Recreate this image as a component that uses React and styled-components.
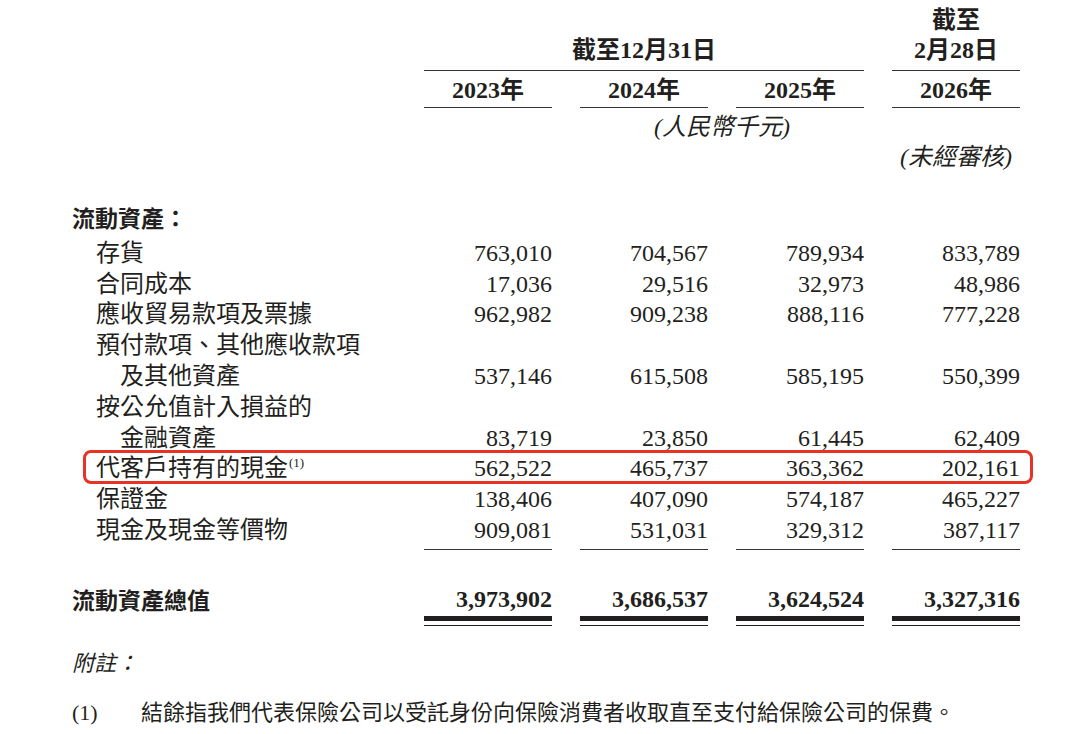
import styled, { createGlobalStyle } from "styled-components";

const GlobalStyle = createGlobalStyle`
  html, body {
    margin: 0;
    padding: 0;
    background: #ffffff;
  }
  body {
    font-family: "Liberation Serif", "Noto Sans CJK TC", serif;
    color: #231f20;
  }
`;

const COLUMNS = "324px repeat(4, 128px)";

const rows = [
  { label: "存貨", indent: 1, values: ["763,010", "704,567", "789,934", "833,789"] },
  { label: "合同成本", indent: 1, values: ["17,036", "29,516", "32,973", "48,986"] },
  { label: "應收貿易款項及票據", indent: 1, values: ["962,982", "909,238", "888,116", "777,228"] },
  { label: "預付款項、其他應收款項", indent: 1, values: [] },
  { label: "及其他資產", indent: 2, values: ["537,146", "615,508", "585,195", "550,399"] },
  { label: "按公允值計入損益的", indent: 1, values: [] },
  { label: "金融資產", indent: 2, values: ["83,719", "23,850", "61,445", "62,409"] },
  { label: "代客戶持有的現金", note: "(1)", highlight: true, indent: 1, values: ["562,522", "465,737", "363,362", "202,161"] },
  { label: "保證金", indent: 1, values: ["138,406", "407,090", "574,187", "465,227"] },
  { label: "現金及現金等價物", indent: 1, underline: true, values: ["909,081", "531,031", "329,312", "387,117"] },
];

const totals = ["3,973,902", "3,686,537", "3,624,524", "3,327,316"];
const years = ["2023年", "2024年", "2025年", "2026年"];

export default function App() {
  return (
    <Page>
      <GlobalStyle />
      <Header>
        <PeriodHeading>截至12月31日</PeriodHeading>
        <StubHeading>
          截至
          <br />
          2月28日
        </StubHeading>
        {years.map((y) => (
          <YearCell key={y}>{y}</YearCell>
        ))}
        <Currency>(人民幣千元)</Currency>
        <Unaudited>(未經審核)</Unaudited>
      </Header>

      <SectionTitle>流動資產：</SectionTitle>

      {rows.map((row) => (
        <Row key={row.label}>
          {row.highlight && <Highlight />}
          <Label $indent={row.indent}>
            {row.label}
            {row.note && <Note>{row.note}</Note>}
          </Label>
          {row.values.map((v, i) => (
            <Value key={i} $underline={row.underline}>
              {v}
            </Value>
          ))}
        </Row>
      ))}

      <TotalRow>
        <TotalLabel>流動資產總值</TotalLabel>
        {totals.map((v) => (
          <TotalCell key={v}>
            <TotalValue>{v}</TotalValue>
          </TotalCell>
        ))}
      </TotalRow>

      <NoteTitle>附註：</NoteTitle>
      <Footnote>
        <span>(1)</span>
        <span>結餘指我們代表保險公司以受託身份向保險消費者收取直至支付給保險公司的保費。</span>
      </Footnote>
    </Page>
  );
}

const Page = styled.div`
  width: 1080px;
  height: 734px;
  box-sizing: border-box;
  padding: 5px 60px 0 72px;
  overflow: hidden;
`;

const Header = styled.div`
  display: grid;
  grid-template-columns: ${COLUMNS};
  column-gap: 28px;
  font-size: 24px;
  line-height: 30px;
`;

const PeriodHeading = styled.div`
  grid-column: 2 / 5;
  grid-row: 1;
  align-self: end;
  text-align: center;
  font-weight: 700;
  padding-bottom: 5px;
  border-bottom: 1.5px solid #333;
`;

const StubHeading = styled.div`
  grid-column: 5;
  grid-row: 1;
  text-align: center;
  font-weight: 700;
  padding-bottom: 5px;
  border-bottom: 1.5px solid #333;
`;

const YearCell = styled.div`
  grid-row: 2;
  &:nth-of-type(3) { grid-column: 2; }
  &:nth-of-type(4) { grid-column: 3; }
  &:nth-of-type(5) { grid-column: 4; }
  &:nth-of-type(6) { grid-column: 5; }
  text-align: center;
  font-weight: 700;
  padding: 4px 0 2px;
  border-bottom: 1.5px solid #333;
`;

const Currency = styled.div`
  grid-column: 2 / 6;
  grid-row: 3;
  text-align: center;
  font-style: italic;
  padding-top: 4px;
`;

const Unaudited = styled.div`
  grid-column: 5;
  grid-row: 4;
  text-align: center;
  font-style: italic;
`;

const SectionTitle = styled.div`
  margin-top: 30px;
  margin-bottom: 5px;
  font-family: "Noto Sans CJK TC", sans-serif;
  font-weight: 700;
  font-size: 23px;
  line-height: 30.8px;
`;

const Row = styled.div`
  position: relative;
  display: grid;
  grid-template-columns: ${COLUMNS};
  column-gap: 28px;
  font-size: 24px;
  line-height: 30.8px;
`;

const Highlight = styled.div`
  position: absolute;
  left: 11px;
  right: -13px;
  top: -3px;
  bottom: 0;
  border: 3px solid #e63323;
  border-radius: 8px;
  pointer-events: none;
`;

const Label = styled.div`
  padding-left: ${(p) => p.$indent * 24}px;
  white-space: nowrap;
`;

const Note = styled.sup`
  font-size: 13px;
  line-height: 0;
  vertical-align: 9px;
  margin-left: 1px;
`;

const Value = styled.div`
  text-align: right;
  padding-bottom: ${(p) => (p.$underline ? "3px" : "0")};
  border-bottom: ${(p) => (p.$underline ? "1.5px solid #333" : "none")};
`;

const TotalRow = styled(Row)`
  margin-top: 34px;
`;

const TotalLabel = styled.div`
  font-family: "Noto Sans CJK TC", sans-serif;
  font-weight: 700;
  font-size: 23px;
`;

const TotalCell = styled.div`
  padding-bottom: 3.5px;
  border-bottom: 1.5px solid #231f20;
`;

const TotalValue = styled.div`
  text-align: right;
  font-weight: 700;
  padding-bottom: 1.5px;
  border-bottom: 5.5px solid #231f20;
`;

const NoteTitle = styled.div`
  margin-top: 23px;
  font-size: 22px;
  line-height: 30px;
  font-style: italic;
`;

const Footnote = styled.div`
  display: grid;
  grid-template-columns: 69px auto;
  margin-top: 19px;
  font-size: 22px;
  line-height: 30px;
`;
